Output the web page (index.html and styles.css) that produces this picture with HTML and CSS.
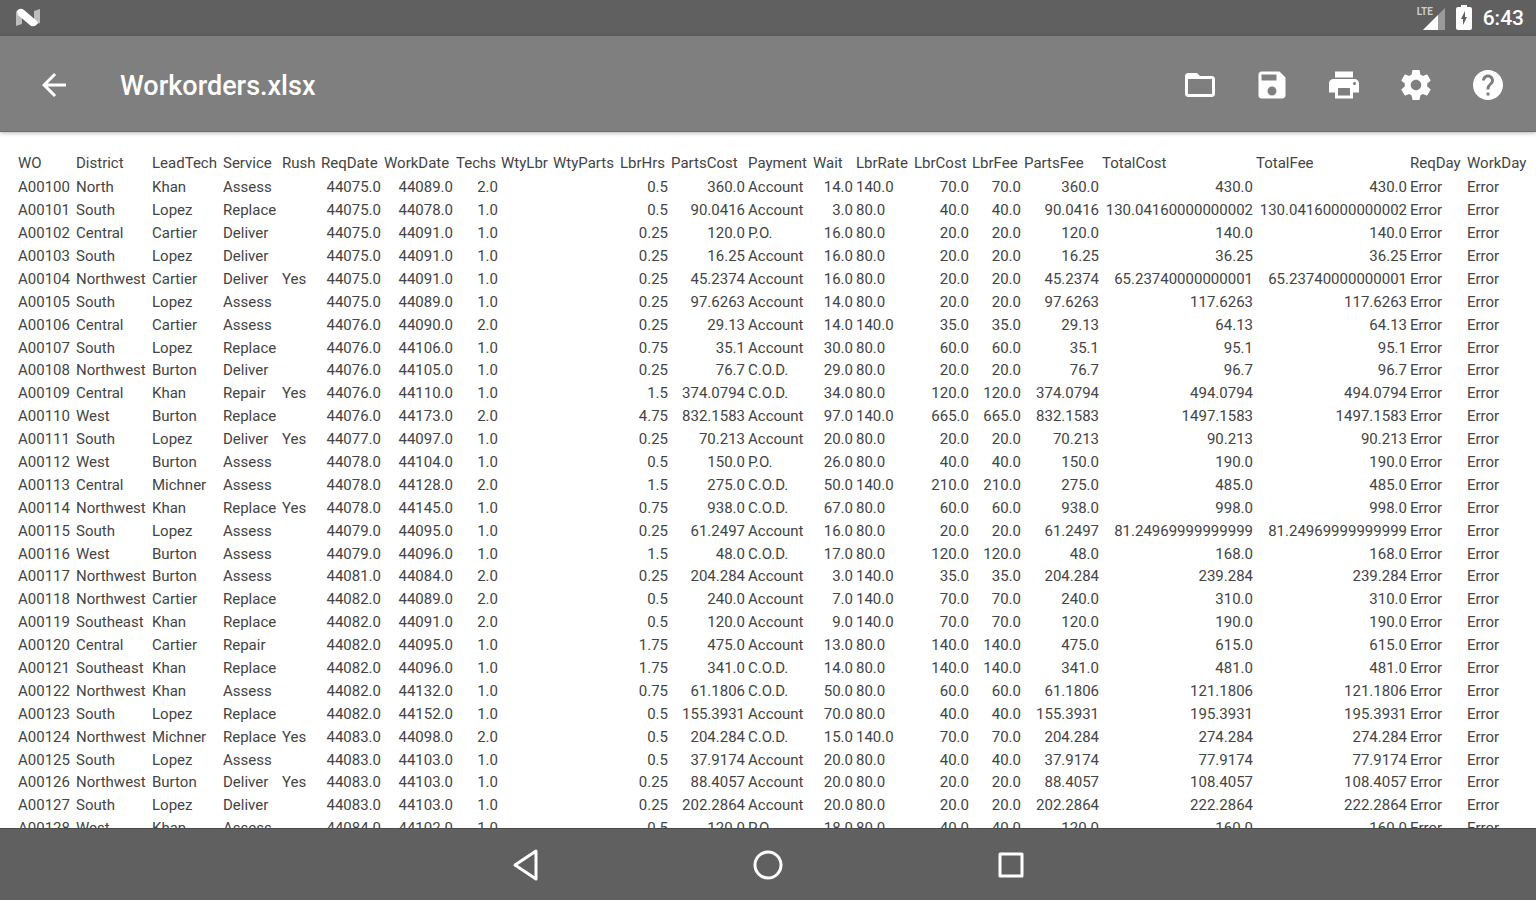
FILE: index.html
```
<!DOCTYPE html>
<html lang="en">
<head>
    <meta charset="UTF-8">
    <title>Workorders.xlsx</title>
    <link rel="stylesheet" href="styles.css">
</head>
<body>
    <div class="status-bar">
        <svg class="n-logo" viewBox="0 0 24 20">
            <path fill="#bdbdbd" d="M0 4q2-3 6-2v14l-6 2zM18 3l6-2v14l-6 2z"/>
            <path fill="#fff" d="M1 3q3-4 7-1l14 12q-1 5-7 4L2 7z"/>
        </svg>
        <div class="status-right">
            <div class="signal">
                <span class="network">LTE</span>
                <svg viewBox="0 0 22 22">
                    <path fill="#9a9a9a" d="M22 0v22H0z"/>
                    <path fill="#fff" d="M15 7v15H0z"/>
                </svg>
            </div>
            <svg class="battery" viewBox="0 0 16 26">
                <path fill="#fff" d="M5 0h6v2h3q2 0 2 2v19q0 2-2 2H2q-2 0-2-2V4q0-2 2-2h3z"/>
                <path fill="#606060" d="M9 6v6h2l-4 8v-6H5z"/>
            </svg>
            <span class="clock">6:43</span>
        </div>
    </div>

    <header class="toolbar">
        <button type="button" class="icon-btn" aria-label="Back">
            <svg viewBox="0 0 24 24"><path d="M20 11H7.83l5.59-5.59L12 4l-8 8 8 8 1.41-1.41L7.83 13H20v-2z"/></svg>
        </button>
        <h1>Workorders.xlsx</h1>
        <button type="button" class="icon-btn" aria-label="Open">
            <svg viewBox="0 0 24 24"><path d="M20 6h-8l-2-2H4c-1.1 0-1.99.9-1.99 2L2 18c0 1.1.9 2 2 2h16c1.1 0 2-.9 2-2V8c0-1.1-.9-2-2-2zm0 12H4V8h16v10z"/></svg>
        </button>
        <button type="button" class="icon-btn" aria-label="Save">
            <svg viewBox="0 0 24 24"><path d="M17 3H5c-1.11 0-2 .9-2 2v14c0 1.1.89 2 2 2h14c1.1 0 2-.9 2-2V7l-4-4zm-5 16c-1.66 0-3-1.34-3-3s1.34-3 3-3 3 1.34 3 3-1.34 3-3 3zm3-10H5V5h10v4z"/></svg>
        </button>
        <button type="button" class="icon-btn" aria-label="Print">
            <svg viewBox="0 0 24 24"><path d="M19 8H5c-1.66 0-3 1.34-3 3v6h4v4h12v-4h4v-6c0-1.66-1.34-3-3-3zm-3 11H8v-5h8v5zm3-7c-.55 0-1-.45-1-1s.45-1 1-1 1 .45 1 1-.45 1-1 1zm-1-9H6v4h12V3z"/></svg>
        </button>
        <button type="button" class="icon-btn" aria-label="Settings">
            <svg viewBox="0 0 24 24"><path d="M19.43 12.98c.04-.32.07-.64.07-.98s-.03-.66-.07-.98l2.11-1.65c.19-.15.24-.42.12-.64l-2-3.46c-.12-.22-.39-.3-.61-.22l-2.49 1c-.52-.4-1.08-.73-1.69-.98l-.38-2.65C14.46 2.18 14.25 2 14 2h-4c-.25 0-.46.18-.49.42l-.38 2.65c-.61.25-1.17.59-1.69.98l-2.49-1c-.23-.09-.49 0-.61.22l-2 3.46c-.13.22-.07.49.12.64l2.11 1.65c-.04.32-.07.65-.07.98s.03.66.07.98l-2.11 1.65c-.19.15-.24.42-.12.64l2 3.46c.12.22.39.3.61.22l2.49-1c.52.4 1.08.73 1.69.98l.38 2.65c.03.24.24.42.49.42h4c.25 0 .46-.18.49-.42l.38-2.65c.61-.25 1.17-.59 1.69-.98l2.49 1c.23.09.49 0 .61-.22l2-3.46c.12-.22.07-.49-.12-.64l-2.11-1.65zM12 15.5c-1.93 0-3.5-1.57-3.5-3.5s1.57-3.5 3.5-3.5 3.5 1.57 3.5 3.5-1.57 3.5-3.5 3.5z"/></svg>
        </button>
        <button type="button" class="icon-btn" aria-label="Help">
            <svg viewBox="0 0 24 24"><path d="M12 2C6.48 2 2 6.48 2 12s4.48 10 10 10 10-4.48 10-10S17.52 2 12 2zm1 17h-2v-2h2v2zm2.07-7.75l-.9.92C13.45 12.9 13 13.5 13 15h-2v-.5c0-1.1.45-2.1 1.17-2.83l1.24-1.26c.37-.36.59-.86.59-1.41 0-1.1-.9-2-2-2s-2 .9-2 2H8c0-2.21 1.79-4 4-4s4 1.79 4 4c0 .88-.36 1.68-.93 2.25z"/></svg>
        </button>
    </header>

    <main class="sheet">
        <table>
            <colgroup>
                <col class="c-wo"><col class="c-district"><col class="c-tech"><col class="c-service">
                <col class="c-rush"><col class="c-reqdate"><col class="c-workdate"><col class="c-techs">
                <col class="c-wtylbr"><col class="c-wtyparts"><col class="c-hrs"><col class="c-partscost">
                <col class="c-payment"><col class="c-wait"><col class="c-rate"><col class="c-lbrcost">
                <col class="c-lbrfee"><col class="c-partsfee"><col class="c-total"><col class="c-total">
                <col class="c-reqday"><col class="c-workday">
            </colgroup>
            <thead>
                <tr>
                    <th>WO</th><th>District</th><th>LeadTech</th><th>Service</th><th>Rush</th>
                    <th>ReqDate</th><th>WorkDate</th><th>Techs</th><th>WtyLbr</th><th>WtyParts</th>
                    <th>LbrHrs</th><th>PartsCost</th><th>Payment</th><th>Wait</th><th>LbrRate</th>
                    <th>LbrCost</th><th>LbrFee</th><th>PartsFee</th><th>TotalCost</th><th>TotalFee</th>
                    <th>ReqDay</th><th>WorkDay</th>
                </tr>
            </thead>
            <tbody id="rows"></tbody>
        </table>
    </main>

    <nav class="nav-bar">
        <button type="button" aria-label="Back">
            <svg viewBox="0 0 36 36"><path d="M29 4v28L8 18z"/></svg>
        </button>
        <button type="button" aria-label="Home">
            <svg viewBox="0 0 36 36"><circle cx="18" cy="18" r="13"/></svg>
        </button>
        <button type="button" aria-label="Recent apps">
            <svg viewBox="0 0 36 36"><path d="M7 7h22v22H7z"/></svg>
        </button>
    </nav>

    <script>
        // WO, district, tech, service, rush, req date, work date, techs, hours, parts, payment, wait, rate, labor, total
        const orders = `A00100,North,Khan,Assess,,44075.0,44089.0,2.0,0.5,360.0,Account,14.0,140.0,70.0,430.0
A00101,South,Lopez,Replace,,44075.0,44078.0,1.0,0.5,90.0416,Account,3.0,80.0,40.0,130.04160000000002
A00102,Central,Cartier,Deliver,,44075.0,44091.0,1.0,0.25,120.0,P.O.,16.0,80.0,20.0,140.0
A00103,South,Lopez,Deliver,,44075.0,44091.0,1.0,0.25,16.25,Account,16.0,80.0,20.0,36.25
A00104,Northwest,Cartier,Deliver,Yes,44075.0,44091.0,1.0,0.25,45.2374,Account,16.0,80.0,20.0,65.23740000000001
A00105,South,Lopez,Assess,,44075.0,44089.0,1.0,0.25,97.6263,Account,14.0,80.0,20.0,117.6263
A00106,Central,Cartier,Assess,,44076.0,44090.0,2.0,0.25,29.13,Account,14.0,140.0,35.0,64.13
A00107,South,Lopez,Replace,,44076.0,44106.0,1.0,0.75,35.1,Account,30.0,80.0,60.0,95.1
A00108,Northwest,Burton,Deliver,,44076.0,44105.0,1.0,0.25,76.7,C.O.D.,29.0,80.0,20.0,96.7
A00109,Central,Khan,Repair,Yes,44076.0,44110.0,1.0,1.5,374.0794,C.O.D.,34.0,80.0,120.0,494.0794
A00110,West,Burton,Replace,,44076.0,44173.0,2.0,4.75,832.1583,Account,97.0,140.0,665.0,1497.1583
A00111,South,Lopez,Deliver,Yes,44077.0,44097.0,1.0,0.25,70.213,Account,20.0,80.0,20.0,90.213
A00112,West,Burton,Assess,,44078.0,44104.0,1.0,0.5,150.0,P.O.,26.0,80.0,40.0,190.0
A00113,Central,Michner,Assess,,44078.0,44128.0,2.0,1.5,275.0,C.O.D.,50.0,140.0,210.0,485.0
A00114,Northwest,Khan,Replace,Yes,44078.0,44145.0,1.0,0.75,938.0,C.O.D.,67.0,80.0,60.0,998.0
A00115,South,Lopez,Assess,,44079.0,44095.0,1.0,0.25,61.2497,Account,16.0,80.0,20.0,81.24969999999999
A00116,West,Burton,Assess,,44079.0,44096.0,1.0,1.5,48.0,C.O.D.,17.0,80.0,120.0,168.0
A00117,Northwest,Burton,Assess,,44081.0,44084.0,2.0,0.25,204.284,Account,3.0,140.0,35.0,239.284
A00118,Northwest,Cartier,Replace,,44082.0,44089.0,2.0,0.5,240.0,Account,7.0,140.0,70.0,310.0
A00119,Southeast,Khan,Replace,,44082.0,44091.0,2.0,0.5,120.0,Account,9.0,140.0,70.0,190.0
A00120,Central,Cartier,Repair,,44082.0,44095.0,1.0,1.75,475.0,Account,13.0,80.0,140.0,615.0
A00121,Southeast,Khan,Replace,,44082.0,44096.0,1.0,1.75,341.0,C.O.D.,14.0,80.0,140.0,481.0
A00122,Northwest,Khan,Assess,,44082.0,44132.0,1.0,0.75,61.1806,C.O.D.,50.0,80.0,60.0,121.1806
A00123,South,Lopez,Replace,,44082.0,44152.0,1.0,0.5,155.3931,Account,70.0,80.0,40.0,195.3931
A00124,Northwest,Michner,Replace,Yes,44083.0,44098.0,2.0,0.5,204.284,C.O.D.,15.0,140.0,70.0,274.284
A00125,South,Lopez,Assess,,44083.0,44103.0,1.0,0.5,37.9174,Account,20.0,80.0,40.0,77.9174
A00126,Northwest,Burton,Deliver,Yes,44083.0,44103.0,1.0,0.25,88.4057,Account,20.0,80.0,20.0,108.4057
A00127,South,Lopez,Deliver,,44083.0,44103.0,1.0,0.25,202.2864,Account,20.0,80.0,20.0,222.2864
A00128,West,Khan,Assess,,44084.0,44102.0,1.0,0.5,120.0,P.O.,18.0,80.0,40.0,160.0`;

        // the rate column is stored as text, so it stays on the left
        const numeric = [5, 6, 7, 10, 11, 13, 15, 16, 17, 18, 19];

        const tbody = document.getElementById('rows');
        orders.split('\n').forEach(line => {
            const [wo, district, tech, service, rush, req, work, techs, hours, parts, payment, wait, rate, labor, total] = line.split(',');
            const cells = [wo, district, tech, service, rush, req, work, techs, '', '', hours, parts,
                payment, wait, rate, labor, labor, parts, total, total, 'Error', 'Error'];
            const tr = tbody.insertRow();
            cells.forEach((value, i) => {
                const td = tr.insertCell();
                td.textContent = value;
                if (numeric.includes(i)) td.className = 'num';
            });
        });
    </script>
</body>
</html>
```

FILE: styles.css
```
* {
    box-sizing: border-box;
}
body {
    margin: 0;
    height: 100vh;
    display: flex;
    flex-direction: column;
    overflow: hidden;
    background: #fff;
    font-family: Roboto, "Liberation Sans", sans-serif;
}
button {
    padding: 0;
    border: none;
    background: none;
    display: flex;
    align-items: center;
    justify-content: center;
    cursor: pointer;
}

/* status bar */
.status-bar {
    height: 36px;
    flex: none;
    display: flex;
    align-items: center;
    justify-content: space-between;
    padding: 0 12px 0 16px;
    background: #606060;
    color: #fff;
}
.n-logo {
    width: 24px;
    height: 20px;
}
.status-right {
    display: flex;
    align-items: center;
    gap: 11px;
}
.signal {
    position: relative;
    width: 28px;
    height: 24px;
    display: flex;
    align-items: flex-end;
    justify-content: flex-end;
}
.signal svg {
    width: 22px;
    height: 22px;
}
.network {
    position: absolute;
    top: 1px;
    left: 0;
    font-size: 10px;
    line-height: 10px;
    font-weight: 700;
    color: #ccc;
}
.battery {
    width: 16px;
    height: 26px;
}
.clock {
    font-size: 21px;
    font-weight: 500;
}

/* toolbar */
.toolbar {
    height: 96px;
    flex: none;
    display: flex;
    align-items: center;
    padding: 2px 12px 0 18px;
    background: #7f7f7f;
    border-bottom: 1px solid #6c6c6c;
    box-shadow: 0 1px 4px rgba(0, 0, 0, 0.3);
    z-index: 1;
}
.toolbar h1 {
    flex: 1;
    margin: 0 0 0 30px;
    padding-top: 2px;
    font-size: 27px;
    font-weight: 500;
    color: #fff;
}
.icon-btn {
    width: 72px;
    height: 72px;
}
.icon-btn svg {
    width: 36px;
    height: 36px;
    fill: #fff;
}

/* spreadsheet */
.sheet {
    flex: 1;
    min-height: 0;
    overflow: hidden;
    padding: 18px 0 0 18px;
}
table {
    width: 100%;
    table-layout: fixed;
    border-collapse: collapse;
    font-size: 15px;
    line-height: 22px;
    color: #444;
}
th, td {
    height: 23px;
    padding: 0 3px 0 0;
    font-weight: 400;
    text-align: left;
    white-space: nowrap;
}
th {
    height: 25px;
}
tr:nth-child(9n) td {
    height: 22px;
}
.num {
    text-align: right;
}
.c-wo { width: 58px; }
.c-district { width: 76px; }
.c-tech { width: 71px; }
.c-service { width: 59px; }
.c-rush { width: 39px; }
.c-reqdate { width: 63px; }
.c-workdate { width: 72px; }
.c-techs { width: 45px; }
.c-wtylbr { width: 52px; }
.c-wtyparts { width: 67px; }
.c-hrs { width: 51px; }
.c-partscost { width: 77px; }
.c-payment { width: 65px; }
.c-wait { width: 43px; }
.c-rate { width: 58px; }
.c-lbrcost { width: 58px; }
.c-lbrfee { width: 52px; }
.c-partsfee { width: 78px; }
.c-total { width: 154px; }
.c-reqday { width: 57px; }
.c-workday { width: 69px; }

/* navigation bar */
.nav-bar {
    height: 72px;
    flex: none;
    display: flex;
    align-items: center;
    justify-content: center;
    gap: 171px;
    background: #606060;
    border-top: 1px solid #4a4a4a;
}
.nav-bar button {
    width: 72px;
    height: 70px;
}
.nav-bar svg {
    width: 36px;
    height: 36px;
    fill: none;
    stroke: #fff;
    stroke-width: 3;
    stroke-linejoin: round;
}
```
